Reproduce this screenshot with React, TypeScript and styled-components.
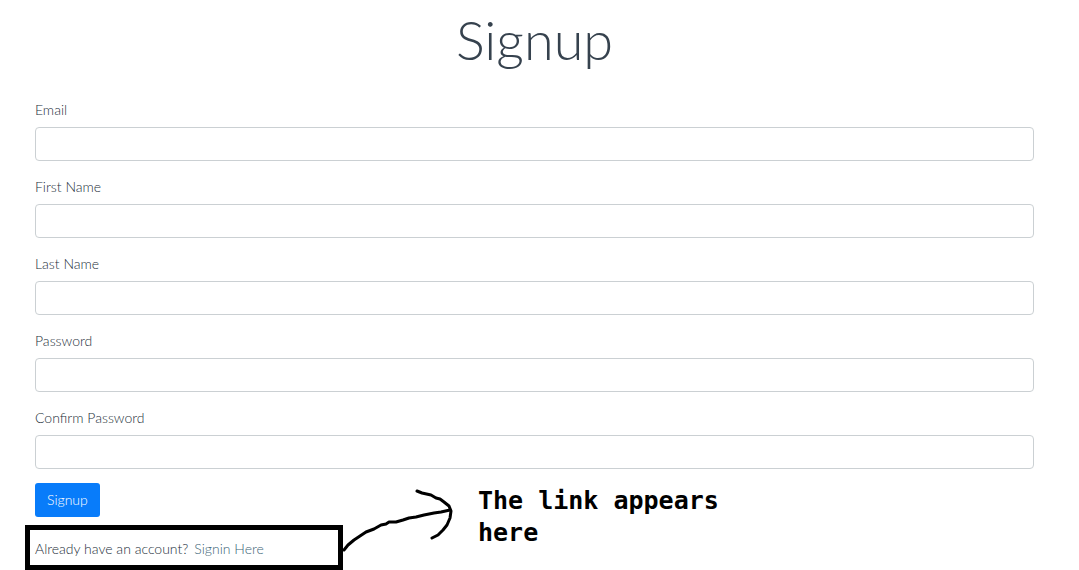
import React from 'react';
import styled, { createGlobalStyle } from 'styled-components';

const GlobalStyle = createGlobalStyle`
  *, *::before, *::after { box-sizing: border-box; }
  body {
    margin: 0;
    background: #fff;
    color: #25303b;
    font-family: Lato, "Liberation Sans", sans-serif;
    font-size: 14px;
    font-weight: 300;
    line-height: 20px;
  }
`;

const Page = styled.main`
  padding: 6px 45px 0 35px;
`;

const Title = styled.h1`
  margin: 0 0 26px;
  color: #36424e;
  font-size: 54px;
  font-weight: 300;
  line-height: 68px;
  text-align: center;
`;

const Form = styled.form`
  display: flex;
  flex-direction: column;
  align-items: flex-start;
  gap: 14px;
`;

const FieldList = styled.div`
  display: grid;
  gap: 16px;
  width: 100%;
`;

const Field = styled.div`
  display: flex;
  flex-direction: column;
  gap: 7px;
`;

const Label = styled.label`
  display: block;
`;

const Input = styled.input`
  width: 100%;
  height: 34px;
  padding: 6px 12px;
  border: 1px solid #cbd0d3;
  border-radius: 4px;
  background: #fff;
  color: inherit;
  font: inherit;
`;

const SubmitButton = styled.button`
  height: 34px;
  padding: 0 12px;
  border: 0;
  border-radius: 3px;
  background: #087cfa;
  color: #fff;
  font: inherit;
  cursor: pointer;
`;

const Footer = styled.div`
  position: relative;
  display: flex;
  margin: 8px 0 0 -10px;
`;

const SigninBox = styled.p`
  display: flex;
  align-items: center;
  gap: 6px;
  width: 318px;
  height: 45px;
  margin: 0;
  padding: 3px 5px 0;
  border: 5px solid #000;
`;

const SigninLink = styled.a`
  color: #3d6577;
  text-decoration: none;
`;

const Arrow = styled.svg`
  position: absolute;
  left: 315px;
  bottom: 15px;
  width: 115px;
  height: 70px;
  fill: none;
  stroke: #000;
  stroke-width: 3;
  stroke-linecap: round;
  stroke-linejoin: round;
`;

const Note = styled.p`
  position: absolute;
  left: 453px;
  bottom: 21px;
  width: 260px;
  margin: 0;
  color: #000;
  font: bold 25px/32px "DejaVu Sans Mono", "Liberation Mono", monospace;
`;

const fields = [
  { id: 'email', label: 'Email', type: 'email' },
  { id: 'firstName', label: 'First Name', type: 'text' },
  { id: 'lastName', label: 'Last Name', type: 'text' },
  { id: 'password', label: 'Password', type: 'password' },
  { id: 'confirmPassword', label: 'Confirm Password', type: 'password' },
];

export default function App() {
  return (
    <>
      <GlobalStyle />
      <Page>
        <Title>Signup</Title>
        <Form onSubmit={(event) => event.preventDefault()}>
          <FieldList>
            {fields.map(({ id, label, type }) => (
              <Field key={id}>
                <Label htmlFor={id}>{label}</Label>
                <Input id={id} name={id} type={type} />
              </Field>
            ))}
          </FieldList>
          <SubmitButton type="submit">Signup</SubmitButton>
        </Form>
        <Footer>
          <SigninBox>
            Already have an account?
            <SigninLink href="#signin">Signin Here</SigninLink>
          </SigninBox>
          <Arrow viewBox="340 485 115 70" aria-hidden="true">
            <path d="M344 550 L348 545 L354 540 L360 536 L366 532 L374 529 L381 525 L386 524 L389 522 L396 522 L403 520 L409 518 L416 517 L424 515 L434 513 L441 512 L450 510" />
            <path d="M417 491 L422 493 L431 495 L436 498 L440 499 L444 502 L449 506 L451 511 L450 518 L447 525 L443 530 L438 535 L432 538" />
          </Arrow>
          <Note>The link appears here</Note>
        </Footer>
      </Page>
    </>
  );
}
